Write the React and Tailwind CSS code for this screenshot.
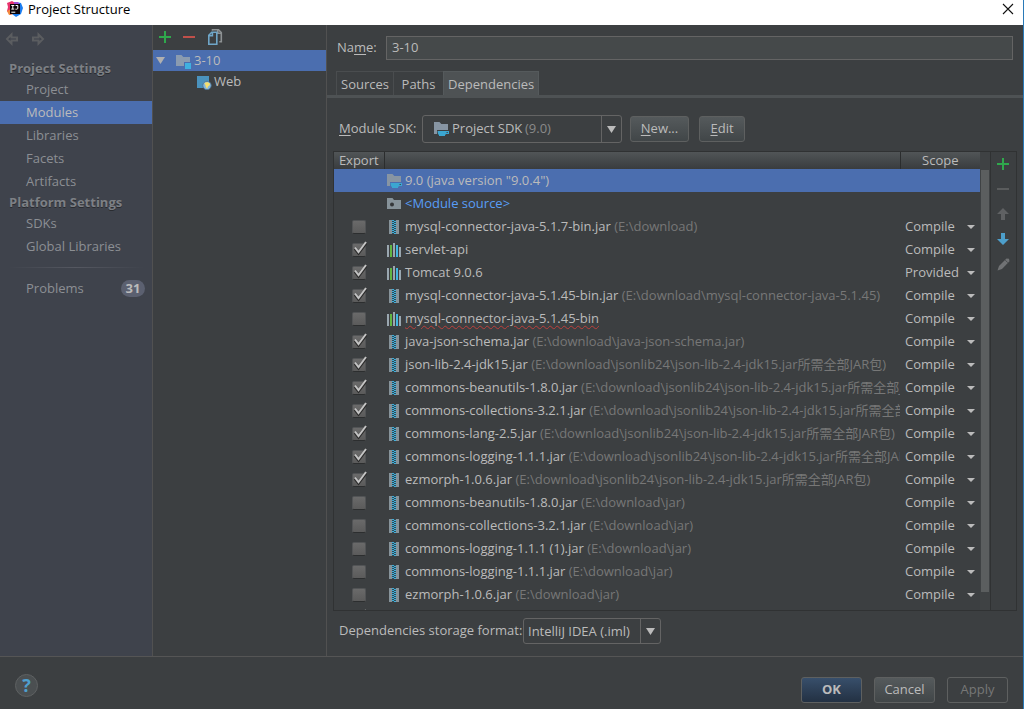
import React from "react";

const SETTINGS = [
  {
    title: "Project Settings",
    items: ["Project", "Modules", "Libraries", "Facets", "Artifacts"],
  },
  { title: "Platform Settings", items: ["SDKs", "Global Libraries"] },
];

const JSON_LIB = "(E:\\download\\jsonlib24\\json-lib-2.4-jdk15.jar所需全部JAR包)";
const DEPENDENCIES = [
  { icon: "sdk", name: '9.0 (java version "9.0.4")', selected: true },
  { icon: "source", name: "<Module source>", link: true },
  { icon: "jar", name: "mysql-connector-java-5.1.7-bin.jar", path: "(E:\\download)", scope: "Compile", checked: false },
  { icon: "library", name: "servlet-api", scope: "Compile", checked: true },
  { icon: "library", name: "Tomcat 9.0.6", scope: "Provided", checked: true },
  { icon: "jar", name: "mysql-connector-java-5.1.45-bin.jar", path: "(E:\\download\\mysql-connector-java-5.1.45)", scope: "Compile", checked: true },
  { icon: "library", name: "mysql-connector-java-5.1.45-bin", scope: "Compile", checked: false, error: true },
  { icon: "jar", name: "java-json-schema.jar", path: "(E:\\download\\java-json-schema.jar)", scope: "Compile", checked: true },
  { icon: "jar", name: "json-lib-2.4-jdk15.jar", path: JSON_LIB, scope: "Compile", checked: true },
  { icon: "jar", name: "commons-beanutils-1.8.0.jar", path: JSON_LIB, scope: "Compile", checked: true },
  { icon: "jar", name: "commons-collections-3.2.1.jar", path: JSON_LIB, scope: "Compile", checked: true },
  { icon: "jar", name: "commons-lang-2.5.jar", path: JSON_LIB, scope: "Compile", checked: true },
  { icon: "jar", name: "commons-logging-1.1.1.jar", path: JSON_LIB, scope: "Compile", checked: true },
  { icon: "jar", name: "ezmorph-1.0.6.jar", path: JSON_LIB, scope: "Compile", checked: true },
  { icon: "jar", name: "commons-beanutils-1.8.0.jar", path: "(E:\\download\\jar)", scope: "Compile", checked: false },
  { icon: "jar", name: "commons-collections-3.2.1.jar", path: "(E:\\download\\jar)", scope: "Compile", checked: false },
  { icon: "jar", name: "commons-logging-1.1.1 (1).jar", path: "(E:\\download\\jar)", scope: "Compile", checked: false },
  { icon: "jar", name: "commons-logging-1.1.1.jar", path: "(E:\\download\\jar)", scope: "Compile", checked: false },
  { icon: "jar", name: "ezmorph-1.0.6.jar", path: "(E:\\download\\jar)", scope: "Compile", checked: false },
];

function AppLogo() {
  return (
    <svg width="16" height="16" viewBox="0 0 16 16" className="block" aria-hidden="true">
      <path d="M0 2 5 0l5 3-3 9-4 2-3-4 1-4z" fill="#e8336d" />
      <path d="M0 10 4 8l3 5-5 1z" fill="#f28a3c" />
      <path d="M9 1l5 1 2 5-2 6-5 3-4-3z" fill="#1b7df0" />
      <path d="M7 1l4 0 2 3-6 1z" fill="#a04bd0" />
      <rect x="3" y="3" width="10" height="10" fill="#0c0508" />
      <path d="M4.3 4.5h3M5.8 4.5v3.6M4.3 8.1h3M8.6 4.5h2.2v2.7q0 1-1 1H8.4" stroke="#fff" strokeWidth="1" fill="none" />
      <path d="M4.3 11.2h4" stroke="#fff" strokeWidth="1" />
    </svg>
  );
}

function CloseIcon() {
  return (
    <svg width="12" height="12" viewBox="0 0 12 12" className="block" aria-hidden="true">
      <path d="M1 1l10 10M11 1L1 11" stroke="#111" strokeWidth="1.1" />
    </svg>
  );
}

function NavArrow({ flip }) {
  return (
    <svg width="14" height="14" viewBox="0 0 14 14" className={flip ? "block -scale-x-100" : "block"} aria-hidden="true">
      <path d="M2 7 6.5 2.500v3H12v3H6.5v3z" fill="none" stroke="#5b5d60" strokeWidth="2" />
    </svg>
  );
}

function PlusIcon() {
  return (
    <svg width="12" height="12" viewBox="0 0 12 12" className="block" aria-hidden="true">
      <path d="M5 0h2v5h5v2H7v5H5V7H0V5h5z" fill="#2fa84c" />
    </svg>
  );
}

function MinusIcon({ muted }) {
  return (
    <svg width="12" height="12" viewBox="0 0 12 12" className="block" aria-hidden="true">
      <path d="M0 5h12v2H0z" fill={muted ? "#5a5c5d" : "#c0504a"} />
    </svg>
  );
}

function CopyIcon() {
  return (
    <svg width="16" height="16" viewBox="0 0 16 16" fill="none" strokeWidth="1.6" className="block" aria-hidden="true">
      <path d="M5.500 1.800v-1h6L14.3 3.6v9.2h-2" stroke="#8d9294" />
      <path d="M10.8 .8v3.4h3.5" stroke="#8d9294" />
      <path d="M1.800 6.2 4.8 3.2h5v12h-8z" fill="#3c3f41" stroke="#6fa6c8" />
      <path d="M1.800 6.800h3.6V3.200" stroke="#6fa6c8" />
    </svg>
  );
}

function ModuleIcon() {
  return (
    <svg width="16" height="16" viewBox="0 0 16 16" className="block" aria-hidden="true">
      <path d="M1 2h5.5l1.8 2H15v9H1z" fill="#8a9bb0" />
      <rect x="9" y="9" width="7" height="7" fill="#4b6eaf" />
      <rect x="10" y="10" width="6" height="6" fill="#3fb0e0" />
    </svg>
  );
}

function WebIcon() {
  return (
    <svg width="16" height="16" viewBox="0 0 16 16" className="block" aria-hidden="true">
      <path d="M1 2h12v12H1z" fill="#4a92bd" />
      <circle cx="11" cy="11.5" r="4.2" fill="#86b7dd" stroke="#4a6e8c" strokeWidth=".8" />
      <path d="M8.4 9l3-1 2.800 1.800-.8 1.8-1.400.8-.8 2.400-1.4-1.800-.4-1.8z" fill="#f5df6e" />
    </svg>
  );
}

function SdkIcon() {
  return (
    <svg width="16" height="16" viewBox="0 0 16 16" className="block" aria-hidden="true">
      <path d="M1 1h5.5l1.8 2H15v6H4v4H1z" fill="#8795a3" />
      <path d="M4.500 10H16v3h-3q-.6 1-1 1v1H6v-1Q4.500 13 4.500 10z" fill="#3ba6d1" />
      <path d="M13.500 11h1.500v1h-1.500z" fill="#3c4f60" />
    </svg>
  );
}

function SourceIcon() {
  return (
    <svg width="16" height="16" viewBox="0 0 16 16" className="block" aria-hidden="true">
      <path d="M1 2h5.500l1.5 2H15v9H1z" fill="#87939a" />
      <circle cx="6" cy="8.500" r="2" fill="#35383a" />
    </svg>
  );
}

function JarIcon() {
  const teeth = [1, 3, 5, 7, 9, 11, 13];
  return (
    <svg width="16" height="16" viewBox="0 0 16 16" shapeRendering="crispEdges" className="block" aria-hidden="true">
      <rect x="3" y="1" width="10" height="14" fill="#87939a" />
      <rect x="6" y="1" width="4" height="14" fill="#2f4a56" />
      {teeth.map((y) => (
        <g key={y} fill="#3fb0dc">
          <rect x="6" y={y} width="2" height="1" />
          <rect x="8" y={y + 1} width="2" height="1" />
        </g>
      ))}
    </svg>
  );
}

function LibraryIcon() {
  return (
    <svg width="16" height="16" viewBox="0 0 16 16" shapeRendering="crispEdges" className="block" aria-hidden="true">
      <rect x="1" y="3" width="2" height="12" fill="#9aa7b0" />
      <rect x="4" y="3" width="2" height="12" fill="#62b543" />
      <rect x="7" y="1" width="2" height="14" fill="#9aa7b0" />
      <rect x="10" y="3" width="2" height="12" fill="#40b6e0" />
      <rect x="13" y="5" width="2" height="10" fill="#9aa7b0" />
    </svg>
  );
}

const ICONS = { sdk: SdkIcon, source: SourceIcon, jar: JarIcon, library: LibraryIcon };

function Triangle({ color = "#bbbbbb" }) {
  return (
    <svg width="9" height="9" viewBox="0 0 10 10" className="block" aria-hidden="true">
      <path d="M0 1h10L5 9z" fill={color} />
    </svg>
  );
}

function SmallTriangle() {
  return (
    <svg width="8" height="4" viewBox="0 0 8 4" className="block" aria-hidden="true">
      <path d="M0 0h8L4 4z" fill="#bbbbbb" />
    </svg>
  );
}

function MoveArrow({ down }) {
  return (
    <svg width="12" height="12" viewBox="0 0 12 12" className={down ? "block rotate-180" : "block"} aria-hidden="true">
      <path d="M6 0l6 6H8v6H4V6H0z" fill={down ? "#4d9fcb" : "#5f6163"} />
    </svg>
  );
}

function PencilIcon() {
  return (
    <svg width="13" height="13" viewBox="0 0 13 13" className="block" aria-hidden="true">
      <path d="M9.500 .5l2.500.3.5 2.500L5 11l-4.500 1.500L2 8z" fill="#707274" />
      <path d="M8.300 2.200l2.500 2.500" stroke="#4a4d4f" />
    </svg>
  );
}

function ExportBox({ checked, label }) {
  return (
    <span className="relative mx-auto block size-[14px]">
      <input
        type="checkbox"
        defaultChecked={checked}
        aria-label={label}
        className="peer block size-[14px] appearance-none rounded-[2px] border border-[#525456] border-b-[#2c2e2f] bg-linear-to-b from-[#6a6a6a] to-[#5b5b5b]"
      />
      <svg
        width="16"
        height="16"
        viewBox="0 0 16 16"
        className="pointer-events-none absolute -top-0.5 left-0 hidden peer-checked:block"
        aria-hidden="true"
      >
        <path d="M3 7.500l3.500 4.500L14 2" fill="none" stroke="#2b2b2b" strokeWidth="3" />
        <path d="M3 6.500l3.500 4.500L14 1" fill="none" stroke="#c4c4c4" strokeWidth="2" />
      </svg>
    </span>
  );
}

function DependencyRow({ dep }) {
  const Icon = ICONS[dep.icon];
  const hasScope = Boolean(dep.scope);
  return (
    <tr className={dep.selected ? "h-[23px] bg-[#4b6eaf]" : "h-[23px]"}>
      <td className="p-0">{hasScope && <ExportBox checked={dep.checked} label={"Export " + dep.name} />}</td>
      <td className="p-0">
        <div className="flex h-[23px] items-center gap-[3px] overflow-hidden pl-0.5 whitespace-nowrap">
          <span className="shrink-0">
            <Icon />
          </span>
          <span className="pb-0.5">
            <span
              className={
                dep.link
                  ? "text-[#589df6]"
                  : dep.error
                    ? "underline decoration-[#bc3f3c] decoration-wavy decoration-1 underline-offset-2"
                    : ""
              }
            >
              {dep.name}
            </span>
            {dep.path && <span className="text-[#777777]"> {dep.path}</span>}
          </span>
        </div>
      </td>
      <td className="p-0">
        {hasScope && (
          <div className="relative flex h-[23px] items-center">
            <select
              aria-label={"Scope of " + dep.name}
              defaultValue={dep.scope}
              className="w-full appearance-none bg-transparent pb-0.5 pl-[5px]"
            >
              <option>Compile</option>
              <option>Provided</option>
              <option>Runtime</option>
              <option>Test</option>
            </select>
            <span className="pointer-events-none absolute right-[5px]">
              <SmallTriangle />
            </span>
          </div>
        )}
      </td>
    </tr>
  );
}

function ComboArrow() {
  return (
    <span className="pointer-events-none absolute inset-y-0 right-0 flex w-5 items-center justify-center border-l border-[#646464]">
      <Triangle />
    </span>
  );
}

function Button({ children, className = "", ...rest }) {
  return (
    <button type="button" className={"h-[26px] rounded-[3px] border border-[#5e6060] pb-0.5 " + className} {...rest}>
      {children}
    </button>
  );
}

const RAISED = "bg-linear-to-b from-[#555a5c] to-[#414648]";

function Sidebar() {
  return (
    <nav className="flex w-[153px] shrink-0 flex-col border-r border-[#515151] bg-[#3f434c] text-[#8c8f94]">
      <div className="flex h-[34px] items-center gap-3 pt-0.5 pl-[5px] pb-2">
        <button type="button" aria-label="Back">
          <NavArrow />
        </button>
        <button type="button" aria-label="Forward">
          <NavArrow flip />
        </button>
      </div>
      {SETTINGS.map((group) => (
        <section key={group.title}>
          <h2 className="h-[19px] pl-[9px] leading-[19px] font-bold text-[#7d8085] [text-shadow:0_1px_0_#2a2c30]">
            {group.title}
          </h2>
          <ul>
            {group.items.map((item) => (
              <li key={item}>
                <a
                  href="#"
                  className={
                    item === "Modules"
                      ? "block bg-[#4b6eaf] pl-[26px] leading-[23px] text-[#bbbbbb]"
                      : "block pl-[26px] leading-[23px]"
                  }
                >
                  {item}
                </a>
              </li>
            ))}
          </ul>
        </section>
      ))}
      <div className="mx-2 my-[9px] h-px bg-linear-to-r from-transparent via-[#555861] to-transparent" />
      <a href="#" className="flex h-[23px] items-center justify-between pr-[7px] pb-px pl-[26px]">
        Problems
        <span className="flex h-[17px] w-6 items-center justify-center rounded-full bg-[#5b6070] font-bold text-[#bbbbbb]">
          31
        </span>
      </a>
    </nav>
  );
}

function ModuleTree() {
  return (
    <section className="flex w-[174px] shrink-0 flex-col border-r border-[#515151]">
      <div className="flex h-[25px] items-center gap-3 pb-0.5 pl-1.5">
        <button type="button" aria-label="Add module">
          <PlusIcon />
        </button>
        <button type="button" aria-label="Remove module">
          <MinusIcon />
        </button>
        <button type="button" aria-label="Copy module">
          <CopyIcon />
        </button>
      </div>
      <ul>
        <li>
          <div className="flex h-[21px] items-center bg-[#4b6eaf] pl-[3px]">
            <Triangle color="#b0b0b0" />
            <span className="ml-2.5">
              <ModuleIcon />
            </span>
            <span className="ml-[3px] pb-0.5">3-10</span>
          </div>
          <ul>
            <li className="flex h-[21px] items-center pl-[43px]">
              <WebIcon />
              <span className="ml-0.5 pb-0.5">Web</span>
            </li>
          </ul>
        </li>
      </ul>
    </section>
  );
}

function ModuleEditor() {
  return (
    <main className="flex min-w-0 flex-1 flex-col">
      <div className="flex items-center pt-[11px] pr-2.5 pl-2.5">
        <label htmlFor="module-name" className="w-[49px] pb-0.5">
          Na<u>m</u>e:
        </label>
        <input
          id="module-name"
          defaultValue="3-10"
          className="h-6 min-w-0 flex-1 border border-[#646464] bg-[#45494a] px-[5px] pb-0.5"
        />
      </div>
      <div role="tablist" className="mt-[11px] flex border-b-[3px] border-[#4e5254] pl-[9px]">
        <button role="tab" type="button" className="h-6 min-w-[57px] border border-r-0 border-b-0 border-[#4a4d4f] px-1">
          Sources
        </button>
        <button role="tab" type="button" className="h-6 min-w-[50px] border border-r-0 border-b-0 border-[#4a4d4f] px-1">
          Paths
        </button>
        <button role="tab" type="button" aria-selected="true" className="h-6 border border-b-0 border-[#555a5c] bg-[#4e5254] px-1">
          Dependencies
        </button>
      </div>
      <div className="flex items-center px-3 pt-[17px]">
        <label htmlFor="module-sdk" className="w-[83px] pb-0.5">
          <u>M</u>odule SDK:
        </label>
        <div className="relative flex h-7 w-[200px] items-center rounded-[3px] border border-[#646464]">
          <span className="pointer-events-none absolute left-2.5">
            <SdkIcon />
          </span>
          <select id="module-sdk" className="h-full w-full appearance-none bg-transparent pb-0.5 pl-[29px]">
            <option>Project SDK</option>
          </select>
          <span className="pointer-events-none absolute left-[102px] pb-0.5 text-[#8a8a8a]">(9.0)</span>
          <ComboArrow />
        </div>
        <Button className={"ml-2 w-[59px] " + RAISED}>
          <u>N</u>ew...
        </Button>
        <Button className={"ml-2.5 w-[46px] " + RAISED}>
          <u>E</u>dit
        </Button>
      </div>
      <div className="mt-2 mr-1.5 ml-1.5 flex min-h-0 flex-1 border border-[#303233]">
        <div className="min-w-0 flex-1 overflow-hidden">
          <table className="w-full table-fixed border-collapse">
            <colgroup>
              <col className="w-[50px]" />
              <col />
              <col className="w-[80px]" />
            </colgroup>
            <thead>
              <tr className="h-[17px] bg-linear-to-b from-[#515557] to-[#393c3e] leading-[14px]">
                <th className="border-r border-[#2b2d2e] px-0 pt-0 pb-0.5 font-normal">Export</th>
                <th className="border-r border-l border-r-[#2b2d2e] border-l-[#5d6163] p-0" aria-label="Dependency" />
                <th className="border-l border-[#5d6163] px-0 pt-0 pb-0.5 font-normal">Scope</th>
              </tr>
            </thead>
            <tbody>
              {DEPENDENCIES.map((dep, i) => (
                <DependencyRow key={i} dep={dep} />
              ))}
              <tr className="h-[23px]">
                <td className="p-0">
                  <ExportBox checked label="Export" />
                </td>
                <td className="p-0" />
                <td className="p-0" />
              </tr>
            </tbody>
          </table>
        </div>
        <div className="w-[10px] shrink-0 bg-[#3f4244] pt-[18px] pb-[18px] pl-px">
          <div className="h-full w-2 bg-[#5b5e5f]" />
        </div>
        <div className="flex w-[26px] shrink-0 flex-col items-center gap-[13px] border-l border-[#303233] pt-1.5 pr-px">
          <button type="button" aria-label="Add dependency">
            <PlusIcon />
          </button>
          <button type="button" aria-label="Remove dependency">
            <MinusIcon muted />
          </button>
          <button type="button" aria-label="Move up">
            <MoveArrow />
          </button>
          <button type="button" aria-label="Move down">
            <MoveArrow down />
          </button>
          <button type="button" aria-label="Edit dependency">
            <PencilIcon />
          </button>
        </div>
      </div>
      <div className="flex items-center px-3 pt-[7px] pb-3">
        <label htmlFor="storage-format" className="w-[184px] pb-0.5 whitespace-nowrap">
          Dependencies storage format:
        </label>
        <div className="relative h-[26px] w-[138px] rounded-[3px] border border-[#646464]">
          <select id="storage-format" className="h-full w-full appearance-none bg-transparent pl-1">
            <option>IntelliJ IDEA (.iml)</option>
            <option>Eclipse (.classpath)</option>
          </select>
          <ComboArrow />
        </div>
      </div>
    </main>
  );
}

export default function App() {
  return (
    <div className="flex h-screen flex-col border-r border-[#2a7ab8] bg-[#3c3f41] font-['Open_Sans','Noto_Sans_CJK_SC',sans-serif] text-[13px] leading-5 text-[#bbbbbb] [&_button]:flex [&_button]:items-center [&_button]:justify-center [&_u]:underline-offset-2">
      <header className="flex h-[25px] shrink-0 items-center bg-white pr-[9px] pb-[7px] pl-[7px] text-black">
        <AppLogo />
        <h1 className="ml-[5px] flex-1">Project Structure</h1>
        <button type="button" aria-label="Close">
          <CloseIcon />
        </button>
      </header>
      <div className="flex min-h-0 flex-1">
        <Sidebar />
        <ModuleTree />
        <ModuleEditor />
      </div>
      <footer className="flex h-[53px] shrink-0 items-center gap-3 border-t border-[#555555] pt-3.5 pr-[15px] pl-[15px]">
        <button
          type="button"
          aria-label="Help"
          className="mr-auto mb-2.5 size-[23px] rounded-full border border-[#5e6162] bg-[#4b4f51] text-lg font-bold text-[#4f9fce]"
        >
          ?
        </button>
        <Button className="w-[61px] bg-linear-to-b from-[#384f6b] to-[#233143] font-bold">OK</Button>
        <Button className={"w-[61px] " + RAISED}>Cancel</Button>
        <Button className="w-[61px] text-[#777777]" disabled>
          Apply
        </Button>
      </footer>
    </div>
  );
}
